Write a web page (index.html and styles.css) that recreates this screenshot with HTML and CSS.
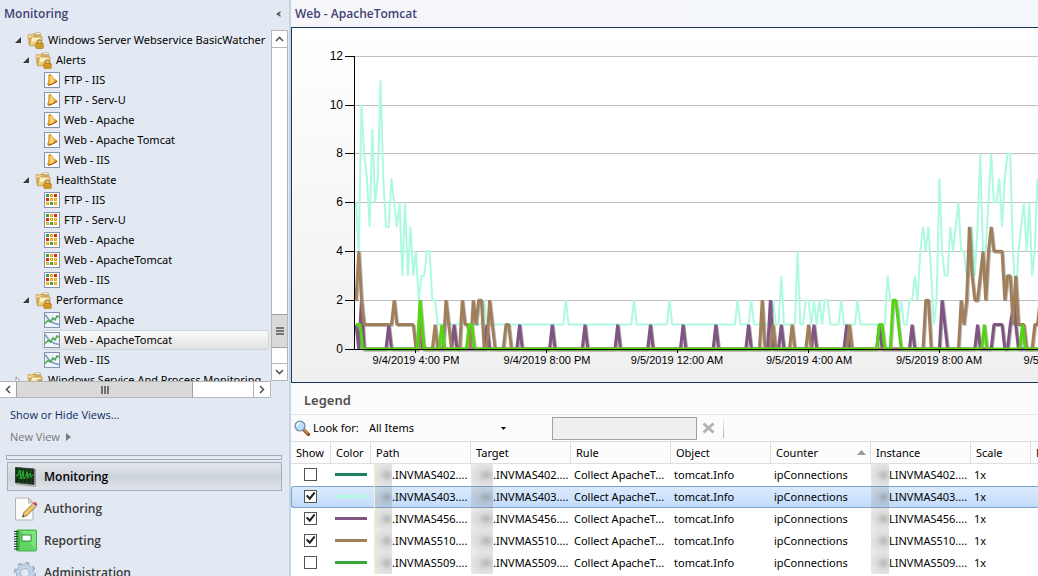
FILE: index.html
```html
<!DOCTYPE html>
<html lang="en">
<head>
<meta charset="utf-8">
<title>Web - ApacheTomcat</title>
<link rel="stylesheet" href="styles.css">
</head>
<body>
<svg class="defs" aria-hidden="true">
  <defs>
    <linearGradient id="gold" x1="0" y1="0" x2="1" y2="1"><stop offset="0" stop-color="#fdf0b8"/><stop offset="1" stop-color="#d9ab48"/></linearGradient>
    <linearGradient id="bellfill" x1="0" y1="0" x2="1" y2="0"><stop offset="0" stop-color="#e79a1c"/><stop offset=".45" stop-color="#ffe27a"/><stop offset="1" stop-color="#d9801a"/></linearGradient>
    <symbol id="folder" viewBox="0 0 17 17">
      <path d="M.5 3.200q0-1 1-1h4l1-1.200h6.500l1 1.200v3h1v8H1.500z" fill="#d3ae62"/>
      <path d="M7.500 2.500L9 .4h4l.8 2.100z" fill="#eef3f6" stroke="#b99a5c" stroke-width=".6"/>
      <path d="M1.500 3.500h5v2h-5z" fill="#f6e3a4"/>
      <path d="M2.500 13.800L4.500 5h10.700l-1.200 8.800z" fill="url(#gold)" stroke="#b98f43" stroke-width=".7"/>
      <path d="M5.200 5.800h8.600l-.3 2.200-9 2z" fill="#fff4cc" opacity=".8"/>
      <path d="M10.300 11.500V10a2.200 2.200 0 0 1 4.400 0v1.500" fill="none" stroke="#a88a4a" stroke-width="1.200"/>
      <rect x="9" y="11.400" width="7.200" height="5" rx=".6" fill="#e5ae27" stroke="#a7730f" stroke-width=".8"/>
      <path d="M9.500 13h6.500M9.500 14.800h6.500" stroke="#b07a14" stroke-width=".6"/>
    </symbol>
    <symbol id="bell" viewBox="0 0 16 16">
      <rect x=".5" y=".5" width="15" height="15" fill="#fbfcfe" stroke="#8494ae"/>
      <path d="M4.800 3q1-1.500 2.400.2c1.400 2.800 2.900 4 5.200 5.200q1.200 1 0 1.800l-7 3q-2 .3-1.700-1.200c1.200-2.700 1.400-5.500 1.100-9z" fill="url(#bellfill)" stroke="#c77a14" stroke-width=".7"/>
      <path d="M4.500 13.200q4.500-.8 8.500-4" fill="none" stroke="#9a4a10" stroke-width="1"/>
    </symbol>
    <symbol id="state" viewBox="0 0 16 16">
      <rect x=".5" y=".5" width="15" height="15" fill="#fff" stroke="#8494ae"/>
      <path d="M2 2h3v3h-3z" fill="#3f9c45"/><path d="M10 2h3v3h-3zM2 6h3v3h-3z" fill="#d22a20"/>
      <path d="M6 2h3v3h-3zM6 6h3v3h-3zM10 6h3v3h-3zM2 10h3v3h-3zM10 10h3v3h-3z" fill="#e5a50e"/>
      <path d="M6 10h3v3h-3z" fill="#4ca249"/>
      <path d="M7 3h1v1h-1zM7 7h1v1h-1zM11 7h1v1h-1zM3 11h1v1h-1zM11 11h1v1h-1z" fill="#ffd866"/>
    </symbol>
    <symbol id="perf" viewBox="0 0 16 16">
      <rect x=".5" y=".5" width="15" height="15" fill="#eff3fa" stroke="#8494ae"/>
      <path d="M1 2.500l3 4 3.500 3.500 3.500 1.500 4 1" fill="none" stroke="#7f9cc6" stroke-width="1.600"/>
      <path d="M1 11.500l3-3 2.500 1.500 2.500-4 2 2 2-4 2 1" fill="none" stroke="#46a842" stroke-width="1.500"/>
    </symbol>
    <symbol id="open" viewBox="0 0 6 6"><path d="M6 0v6H0z" fill="#3b3b3b"/></symbol>
    <symbol id="shut" viewBox="0 0 6 8"><path d="M1 .8v6.400L4.500 4z" fill="#fff" stroke="#999"/></symbol>
  </defs>
</svg>

<aside class="sidebar">
  <header class="side-head"><h1>Monitoring</h1><button class="collapse" aria-label="Collapse"><svg width="6" height="6" viewBox="0 0 6 6"><path d="M5.500 0L1 3l4.500 3V4L4 3l1.500-1z" fill="#555"/></svg></button></header>

  <div class="tree-pane">
    <ul class="tree">
      <li><a href="#" class="node top"><svg class="exp"><use href="#open"/></svg><svg class="fold"><use href="#folder"/></svg>Windows Server Webservice BasicWatcher</a></li>
      <li><a href="#" class="node group"><svg class="exp"><use href="#open"/></svg><svg class="fold"><use href="#folder"/></svg>Alerts</a></li>
      <li><a href="#" class="node leaf"><svg class="ico"><use href="#bell"/></svg>FTP - IIS</a></li>
      <li><a href="#" class="node leaf"><svg class="ico"><use href="#bell"/></svg>FTP - Serv-U</a></li>
      <li><a href="#" class="node leaf"><svg class="ico"><use href="#bell"/></svg>Web - Apache</a></li>
      <li><a href="#" class="node leaf"><svg class="ico"><use href="#bell"/></svg>Web - Apache Tomcat</a></li>
      <li><a href="#" class="node leaf"><svg class="ico"><use href="#bell"/></svg>Web - IIS</a></li>
      <li><a href="#" class="node group"><svg class="exp"><use href="#open"/></svg><svg class="fold"><use href="#folder"/></svg>HealthState</a></li>
      <li><a href="#" class="node leaf"><svg class="ico"><use href="#state"/></svg>FTP - IIS</a></li>
      <li><a href="#" class="node leaf"><svg class="ico"><use href="#state"/></svg>FTP - Serv-U</a></li>
      <li><a href="#" class="node leaf"><svg class="ico"><use href="#state"/></svg>Web - Apache</a></li>
      <li><a href="#" class="node leaf"><svg class="ico"><use href="#state"/></svg>Web - ApacheTomcat</a></li>
      <li><a href="#" class="node leaf"><svg class="ico"><use href="#state"/></svg>Web - IIS</a></li>
      <li><a href="#" class="node group"><svg class="exp"><use href="#open"/></svg><svg class="fold"><use href="#folder"/></svg>Performance</a></li>
      <li><a href="#" class="node leaf"><svg class="ico"><use href="#perf"/></svg>Web - Apache</a></li>
      <li><a href="#" class="node leaf current"><svg class="ico"><use href="#perf"/></svg>Web - ApacheTomcat</a></li>
      <li><a href="#" class="node leaf"><svg class="ico"><use href="#perf"/></svg>Web - IIS</a></li>
      <li><a href="#" class="node top"><svg class="exp tall"><use href="#shut"/></svg><svg class="fold"><use href="#folder"/></svg>Windows Service And Process Monitoring</a></li>
    </ul>
    <div class="vbar">
      <button aria-label="Scroll up"><svg width="9" height="6" viewBox="0 0 9 6"><path d="M1 5l3.500-3.500L8 5" fill="none" stroke="#555" stroke-width="1.600"/></svg></button>
      <div class="track"></div>
      <div class="thumb"><svg width="8" height="8" viewBox="0 0 8 8"><path d="M0 1h8M0 4h8M0 7h8" stroke="#555" stroke-width="1.600"/></svg></div>
      <div class="rest"></div>
      <button aria-label="Scroll down"><svg width="9" height="6" viewBox="0 0 9 6"><path d="M1 1l3.500 3.500L8 1" fill="none" stroke="#555" stroke-width="1.600"/></svg></button>
    </div>
  </div>
  <div class="hbar">
    <button aria-label="Scroll left"><svg width="6" height="9" viewBox="0 0 6 9"><path d="M5 1L1.500 4.500 5 8" fill="none" stroke="#555" stroke-width="1.600"/></svg></button>
    <div class="thumb"><svg width="8" height="8" viewBox="0 0 8 8"><path d="M1 0v8M4 0v8M7 0v8" stroke="#555" stroke-width="1.600"/></svg></div>
    <div class="rest"></div>
    <button aria-label="Scroll right"><svg width="6" height="9" viewBox="0 0 6 9"><path d="M1 1l3.500 3.500L1 8" fill="none" stroke="#555" stroke-width="1.600"/></svg></button>
  </div>

  <div class="view-links">
    <a href="#">Show or Hide Views...</a>
    <button class="new-view">New View <svg width="5" height="8" viewBox="0 0 5 8"><path d="M0 0v8l5-4z" fill="#7b7b7b"/></svg></button>
  </div>
  <div class="splitter"></div>
  <nav class="spaces">
    <a href="#" class="space active"><svg width="24" height="24" viewBox="0 0 24 24"><path d="M2 3l19.500 1.500v17L2 19z" fill="#c9ccd0" stroke="#8a8f96" stroke-width=".8"/><path d="M1.500 2.500l18.500 1.500v15.500l-18.500-2z" fill="#102b12" stroke="#3a3f3c"/><path d="M2 6h17M2 9.500h17M2 13h17M5 3v14M9 3v15M13 4v14.500M17 4v15" stroke="#1f6325" stroke-width=".7"/><path d="M2 11l2-1 2-5 1 9 2-8 1 8 2-3 1-4 1 6 2-5 1 4 2-2" fill="none" stroke="#2bbd36" stroke-width="1"/></svg>Monitoring</a>
    <a href="#" class="space"><svg width="24" height="24" viewBox="0 0 24 24"><path d="M1.500 1h13l4.500 4.500V23H1.500z" fill="#fcfcfa" stroke="#b4b4ae"/><path d="M14.500 1v5H19z" fill="#deded8" stroke="#b4b4ae"/><path d="M8.500 20l1.500-4.500L19 6.500l3 3-9 9z" fill="#f4c468" stroke="#7b5623" stroke-width=".8"/><path d="M19 6.500l2-1.700 2.500 2.500-1.500 2z" fill="#cf4151"/><path d="M18 7.500l1-1 3 3-1 1z" fill="#c3c7cf"/><path d="M8.500 20l.7-2 1.300 1.300z" fill="#222"/></svg>Authoring</a>
    <a href="#" class="space"><svg width="24" height="24" viewBox="0 0 24 24"><rect x="2.500" y="1" width="20" height="21" rx="1" fill="#5fd661" stroke="#4aa94f"/><path d="M3 2h3v19H3z" fill="#3db545"/><path d="M7 2h15v19z" fill="#8fe98c" opacity=".6"/><rect x="8" y="6" width="9" height="6" fill="#fff" stroke="#338c37"/><path d="M0 2.500h4M0 5h4M0 7.500h4M0 10h4M0 12.500h4M0 15h4M0 17.500h4M0 20h4" stroke="#333" stroke-width="1.200"/></svg>Reporting</a>
    <a href="#" class="space"><svg width="24" height="24" viewBox="0 0 24 24"><circle cx="11" cy="12" r="9.300" fill="none" stroke="#8397b2" stroke-width="3.400" stroke-dasharray="3.650 3.650"/><circle cx="11" cy="12" r="6.500" fill="none" stroke="#90a4bd" stroke-width="5"/><circle cx="11" cy="12" r="6.500" fill="none" stroke="#c3d4e7" stroke-width="3.500"/><circle cx="11" cy="12" r="9" fill="none" stroke="#c3d4e7" stroke-width="2" stroke-dasharray="2.500 4.570"/><circle cx="19" cy="20" r="4" fill="#b9c9dc" stroke="#8397b2"/></svg>Administration</a>
  </nav>
</aside>

<main class="content">
  <h2 class="page-title">Web - ApacheTomcat</h2>
  <section class="chart-panel">
    <svg class="chart" viewBox="292 28 1000 354" preserveAspectRatio="xMinYMin slice" role="img" aria-label="ipConnections over time">
      <rect class="plot" x="354" y="56" width="938" height="293"/>
      <path class="grid" d="M355 56.500H1292M355 105.500H1292M355 153.500H1292M355 202.500H1292M355 251.500H1292M355 300.500H1292"/>
      <g transform="translate(356 349) scale(2.726 -24.420)">
        <polyline class="line aqua" points="0,6 1,4 2,10 3,8 4,7 5,5 6,9 7,6 8,7 9,11 10,7 11,5 12,5 13,7 14,6 15,5 16,6 17,3 18,6 19,3 20,5 21,3 22,4 23,2 24,3 25,3 26,4 27,4 28,2 29,2 30,1 38,1 39,2 40,1 46,1 47,2 48,1 76,1 77,2 78,1 101,1 102,2 103,1 114,1 115,2 116,1 139,1 140,2 141,1 144,1 145,2 146,1 152,1 153,2 154,1 155,1 156,3 157,1 161,1 162,4 163,1 164,1 165,2 166,2 167,1 168,2 169,1 170,2 171,1 172,2 173,2 174,1 177,1 178,2 179,1 183,1 184,2 185,1 194,1 195,3 196,2 198,2 199,1 200,2 201,1 202,1 203,2 204,2 205,3 206,2 207,4 208,5 209,4 210,5 211,3 212,1 213,2 214,7 215,4 216,3 217,3 218,5 219,4 220,5 221,6 222,4 223,4 224,3 225,3 226,5 227,3 228,5 229,8 230,4 231,4 232,6 233,8 234,6 235,6 236,7 237,5 238,7 239,8 240,8 241,4 242,2 243,4 244,5 245,6 246,4 247,6 248,3 249,4 250,7 251,5"/>
      </g>
      <g class="shade" transform="translate(357 350) scale(2.726 -24.420)">
        <use href="#purple"/><use href="#brown"/><use href="#green"/>
      </g>
      <g transform="translate(356 349) scale(2.726 -24.420)">
        <polyline id="purple" class="line purple" points="0,1 1,0 2,2 3,0 11,0 12,1 13,0 22.500,0 23.500,1 24.500,0 35,0 36,1 37,0 47,0 48,1 49,0 59,0 60,1 61,0 71,0 72,1 73,0 83,0 84,1 85,0 95,0 96,1 97,0 107,0 108,1 109,0 119,0 120,1 121,0 131,0 132,1 133,0 143,0 144,1 145,0 151,0 152,2 153,0 155,0 156,1 157,0 167,0 168,1 169,0 179,0 180,1 181,0 191,0 192,1 193,0 203,0 204,1 205,0 214,0 215,2 216,1 217,0 227,0 228,1 229,0 233,0 234,1 237,1 238,0 239,0 240,1 241.500,2 242,1 243,0 251,0"/>
        <polyline id="brown" class="line brown" points="0,2 1,4 2,2 3,1 13,1 14,2 15,1 21,1 22,0 23,0 24,1 25,0 28,0 29,1 30,0 32,0 33,2 34,1 35,0 38,0 39,2 40,1 41,1 42,0 43,2 44,1 45,2 46,2 47,0 48,0 49,2 50,1 51,0 54,0 55,1 56,1 57,0 148,0 149,2 150,0 152,0 153,1 154,0 159,0 160,1 161,0 165,0 166,1 167,0 180,0 181,1 182,0 208,0 209,2 210,2 211,0 221,0 222,2 223,1 224,2 225,5 226,3 227,2 228,2 229,3 230,4 231,2 232,4 233,5 234,4 237,4 238,2 239,3 240,3 241,1 242,3 243,1 245,1 246,0 248,0 249,1 250,1 251,2"/>
        <polyline id="green" class="line green" points="0,1 1.500,1 2.500,0 22.500,0 23.500,2 25,0 30.500,0 31.500,1 32.500,0 40.500,0 41.500,1 42.500,1 43.500,0 191,0 192,1 193,1 194,0 196,0 197,2 198,2 199,1 200,0 229.500,0 230.500,1 231.500,0 243.500,0 244.500,1 245.500,0 251,0"/>
      </g>
      <path class="axis" d="M354.500 56V350M345 56.500h10M345 105.500h10M345 153.500h10M345 202.500h10M345 251.500h10M345 300.500h10M345 349.500H1292M415.500 349v4M546.500 349v4M677.500 349v4M808.500 349v4M939.500 349v4"/>
      <g class="labels y"><text x="343" y="60">12</text><text x="343" y="109">10</text><text x="343" y="157">8</text><text x="343" y="206">6</text><text x="343" y="255">4</text><text x="343" y="304">2</text><text x="343" y="353">0</text></g>
      <g class="labels x"><text x="416" y="364">9/4/2019 4:00 PM</text><text x="547" y="364">9/4/2019 8:00 PM</text><text x="677" y="364">9/5/2019 12:00 AM</text><text x="809" y="364">9/5/2019 4:00 AM</text><text x="939" y="364">9/5/2019 8:00 AM</text><text x="1070" y="364">9/5/2019 12:00 PM</text></g>
    </svg>
  </section>

  <h3 class="legend-title">Legend</h3>
  <form class="finder">
    <svg width="16" height="16" viewBox="0 0 16 16"><path d="M9.500 9.500l5 5" stroke="#8a4f1d" stroke-width="3.200" stroke-linecap="round"/><path d="M9.500 9l4.500 4.500" stroke="#d99a55" stroke-width="1.400"/><circle cx="6" cy="6" r="4.900" fill="#b9e0f8" stroke="#7493b3" stroke-width="1.400"/><path d="M3 6a3 3 0 0 1 3-3" fill="none" stroke="#fff" stroke-width="1.500"/></svg>
    <label for="scope">Look for:</label>
    <span class="pick"><select id="scope"><option>All Items</option></select><svg width="5" height="3" viewBox="0 0 5 3"><path d="M0 0h5L2.500 3z"/></svg></span>
    <input class="query" type="text" aria-label="Search text">
    <button class="clear" type="button" aria-label="Clear"><svg width="13" height="12" viewBox="0 0 13 12"><path d="M1.500 1.500l10 9M11.500 1.500l-10 9" stroke="#b2b2b2" stroke-width="3"/></svg></button>
    <span class="sep"></span>
  </form>

  <div class="table-wrap">
    <table>
      <colgroup><col class="c40"><col class="c40"><col class="c100"><col class="c100"><col class="c100"><col class="c100"><col class="c100"><col class="c100"><col class="c60"><col class="c100"></colgroup>
      <thead><tr><th>Show</th><th>Color</th><th>Path</th><th>Target</th><th>Rule</th><th>Object</th><th><span class="sorted">Counter<svg width="9" height="5" viewBox="0 0 9 5"><path d="M0 5h9L4.500 0z" fill="#9a9a9a"/></svg></span></th><th>Instance</th><th>Scale</th><th>Minimum</th></tr></thead>
      <tbody>
        <tr><td><input type="checkbox" aria-label="Show INVMAS402"></td><td><i class="swatch teal"></i></td><td class="m"><i class="mask edge"></i>.INVMAS402....</td><td class="m wide"><i class="mask"></i>.INVMAS402....</td><td>Collect ApacheT...</td><td>tomcat.Info</td><td>ipConnections</td><td class="m flush"><i class="mask"></i>LINVMAS402....</td><td>1x</td><td></td></tr>
        <tr class="selected"><td><input type="checkbox" checked aria-label="Show INVMAS403"></td><td><i class="swatch aqua"></i></td><td class="m"><i class="mask edge"></i>.INVMAS403....</td><td class="m wide"><i class="mask"></i>.INVMAS403....</td><td>Collect ApacheT...</td><td>tomcat.Info</td><td>ipConnections</td><td class="m flush"><i class="mask"></i>LINVMAS403....</td><td>1x</td><td></td></tr>
        <tr><td><input type="checkbox" checked aria-label="Show INVMAS456"></td><td><i class="swatch purple"></i></td><td class="m"><i class="mask edge"></i>.INVMAS456....</td><td class="m wide"><i class="mask"></i>.INVMAS456....</td><td>Collect ApacheT...</td><td>tomcat.Info</td><td>ipConnections</td><td class="m flush"><i class="mask"></i>LINVMAS456....</td><td>1x</td><td></td></tr>
        <tr><td><input type="checkbox" checked aria-label="Show INVMAS510"></td><td><i class="swatch brown"></i></td><td class="m"><i class="mask edge"></i>.INVMAS510....</td><td class="m wide"><i class="mask"></i>.INVMAS510....</td><td>Collect ApacheT...</td><td>tomcat.Info</td><td>ipConnections</td><td class="m flush"><i class="mask"></i>LINVMAS510....</td><td>1x</td><td></td></tr>
        <tr><td><input type="checkbox" aria-label="Show INVMAS509"></td><td><i class="swatch green"></i></td><td class="m"><i class="mask edge"></i>.INVMAS509....</td><td class="m wide"><i class="mask"></i>.INVMAS509....</td><td>Collect ApacheT...</td><td>tomcat.Info</td><td>ipConnections</td><td class="m flush"><i class="mask"></i>LINVMAS509....</td><td>1x</td><td></td></tr>
      </tbody>
    </table>
  </div>
</main>
</body>
</html>
```
FILE: styles.css
```css
* { box-sizing: border-box; }
body {
  margin: 0;
  height: 100vh;
  display: flex;
  overflow: hidden;
  background: #e3e9f2;
  color: #000;
  font: 11px/20px "Noto Sans", "Open Sans", sans-serif;
}
a { color: inherit; text-decoration: none; }
button { font: inherit; border: 0; padding: 0; background: none; color: inherit; }
svg { display: block; flex: none; }
.defs { position: absolute; width: 0; height: 0; }
h1, h2, h3 { margin: 0; font-weight: 600; }

/* Sidebar */
.sidebar { flex: none; width: 291px; display: flex; flex-direction: column; border-right: 2px solid #c9d4e3; }
.side-head { display: flex; align-items: center; justify-content: space-between; height: 28px; flex: none; padding: 0 8px 0 4px; }
.side-head h1, .page-title { font-family: "Open Sans", "Noto Sans", sans-serif; font-size: 12px; line-height: 28px; color: #3f4274; }
.tree-pane { display: flex; height: 353px; flex: none; padding: 2px 1px 0 0; }
.tree { list-style: none; margin: 0; padding: 0; flex: 1; height: 351px; overflow: hidden; }
.node { display: flex; align-items: center; height: 20px; margin-right: 2px; border: 1px solid transparent; white-space: nowrap; }
.top { padding-left: 14px; }
.group { padding-left: 22px; }
.leaf { margin-left: 42px; padding-left: 1px; }
.exp { width: 6px; height: 6px; margin-right: 6px; }
.exp.tall { height: 8px; }
.fold { width: 17px; height: 17px; margin-right: 4px; }
.ico { width: 16px; height: 16px; margin-right: 4px; }
.current { border-color: #d2d5da; border-radius: 3px; background: linear-gradient(#fafafa, #e2e2e4); }

.vbar { width: 17px; display: flex; flex-direction: column; background: #fff; border: 1px solid #b5b5b5; }
.vbar button, .hbar button, .thumb { display: flex; align-items: center; justify-content: center; flex: none; background: #fff; }
.vbar button { height: 16px; }
.track { flex: 1; border-top: 1px solid #b5b5b5; }
.vbar .thumb { height: 34px; background: #d9d9d9; border: solid #a0a0a0; border-width: 1px 0; }
.vbar .rest { height: 16px; border-bottom: 1px solid #b5b5b5; }
.hbar { display: flex; height: 17px; flex: none; margin-right: 18px; background: #fff; border: 1px solid #b5b5b5; border-left: 0; }
.hbar button { width: 16px; }
.hbar .thumb { width: 177px; background: #d9d9d9; border: solid #a0a0a0; border-width: 0 1px; }
.hbar .rest { flex: 1; border-right: 1px solid #b5b5b5; }

.view-links { display: flex; flex-direction: column; align-items: flex-start; gap: 2px; padding: 7px 10px 8px; color: #0b2a66; font-family: "Open Sans", "Noto Sans", sans-serif; }
.new-view { display: flex; align-items: center; gap: 6px; color: #767676; line-height: 20px; }
.splitter { flex: none; height: 5px; margin: 0 7px 2px 6px; border: 1px solid #a3acb8; background: #e9edf3; }
.spaces { margin: 0 7px; }
.space { display: flex; align-items: center; gap: 6px; height: 32px; padding-left: 7px; font-family: "Open Sans", "Noto Sans", sans-serif; font-size: 12px; font-weight: 600; color: #3b3b3b; }
.space.active { height: 29px; margin-bottom: 2px; padding-left: 6px; border: 1px solid #a5b0be; background: linear-gradient(#e3e7ec, #cdd3db 55%, #e1e5ea); color: #000; }

/* Content */
.content { flex: 1; min-width: 0; display: flex; flex-direction: column; background: #fcfcfc; }
.page-title { height: 27px; flex: none; padding-left: 4px; background: linear-gradient(90deg, #f6f6f9, #f3f7fc); }
.chart-panel { flex: none; height: 356px; border: 1px solid #1c3865; border-right: 0; background: linear-gradient(#fff, #efefef); overflow: hidden; }
.chart { width: 1000px; height: 354px; }
.plot { fill: #fff; }
.grid { stroke: #bfbfbf; }
.axis { stroke: #000; fill: none; }
.line { fill: none; stroke-width: 3px; stroke-linejoin: bevel; vector-effect: non-scaling-stroke; }
.line.aqua { stroke: #aefae0; stroke-width: 2px; }
.line.purple { stroke: #7f5581; }
.line.brown { stroke: #a27f5b; }
.line.green { stroke: #55d414; }
.shade { opacity: .4; filter: grayscale(1) brightness(.6); }
.labels { font: 11px "Liberation Sans", Arial, sans-serif; }
.labels.y { text-anchor: end; font-size: 12px; }
.labels.x { text-anchor: middle; }

.legend-title { height: 32px; flex: none; padding-left: 13px; border-bottom: 1px solid #e6e6e6; font-size: 13px; line-height: 34px; color: #505050; }
.finder { display: flex; align-items: center; height: 26px; flex: none; padding: 0 3px; }
.finder label { margin-left: 3px; width: 54px; white-space: nowrap; }
.pick { position: relative; width: 144px; }
.pick select { width: 100%; height: 22px; padding: 0 2px; border: 0; background: transparent; font: inherit; appearance: none; }
.pick svg { position: absolute; right: 5px; top: 10px; }
.query { width: 145px; height: 23px; margin-left: 41px; border: 1px solid #a0a0a0; background: #efefef; }
.clear { margin-left: 5px; }
.sep { width: 1px; height: 19px; margin-left: 8px; background: linear-gradient(#eee, #aaa); }

.table-wrap { flex: 1; overflow: hidden; background: #fff; }
table { width: 840px; table-layout: fixed; border-collapse: separate; border-spacing: 0; }
.c40 { width: 40px; }
.c60 { width: 60px; }
.c100 { width: 100px; }
th { height: 23px; padding: 0 4px 0 5px; text-align: left; font-weight: 400; line-height: 20px; background: #fcfcfc; border: solid #dfdfdf; border-width: 1px 1px 1px 0; white-space: nowrap; overflow: hidden; }
.sorted { display: flex; align-items: center; justify-content: space-between; }
td { height: 22px; padding: 0 3px; line-height: 22px; white-space: nowrap; overflow: hidden; }
tbody td:first-child { padding-left: 13px; }
.selected td { background: linear-gradient(#dcebfc, #c1dbfc); box-shadow: inset 0 1px #7da2ce, inset 0 -1px #7da2ce; }
.selected td:first-child { border-radius: 3px 0 0 3px; box-shadow: inset 0 1px #7da2ce, inset 1px -1px #7da2ce; }
.swatch { display: block; width: 32px; height: 3px; margin: 0 0 2px 1px; }
.swatch.teal { background: #1c8062; }
.swatch.aqua { background: #b3fbe2; }
.swatch.purple { background: #7f5581; }
.swatch.brown { background: #a27f5b; }
.swatch.green { background: #35a835; }
.mask { display: inline-block; vertical-align: top; width: 18px; height: 22px; background: radial-gradient(ellipse at 70% 50%, #7778 0, #7774 40%, #7772 100%); }
.mask.edge { border-left: 1px solid #f6f3b0; }
.m.wide { padding-left: 0; }
.m.wide .mask { width: 22px; }
.m.flush { padding-left: 0; }
input[type="checkbox"] { display: block; appearance: none; width: 13px; height: 13px; margin: 0 0 2px; border: 1px solid #555; background: #fff; }
input[type="checkbox"]:checked::after { content: ""; display: block; width: 11px; height: 11px; background: #222; clip-path: polygon(8% 50%, 22% 38%, 42% 60%, 82% 12%, 94% 26%, 44% 88%); }
```
